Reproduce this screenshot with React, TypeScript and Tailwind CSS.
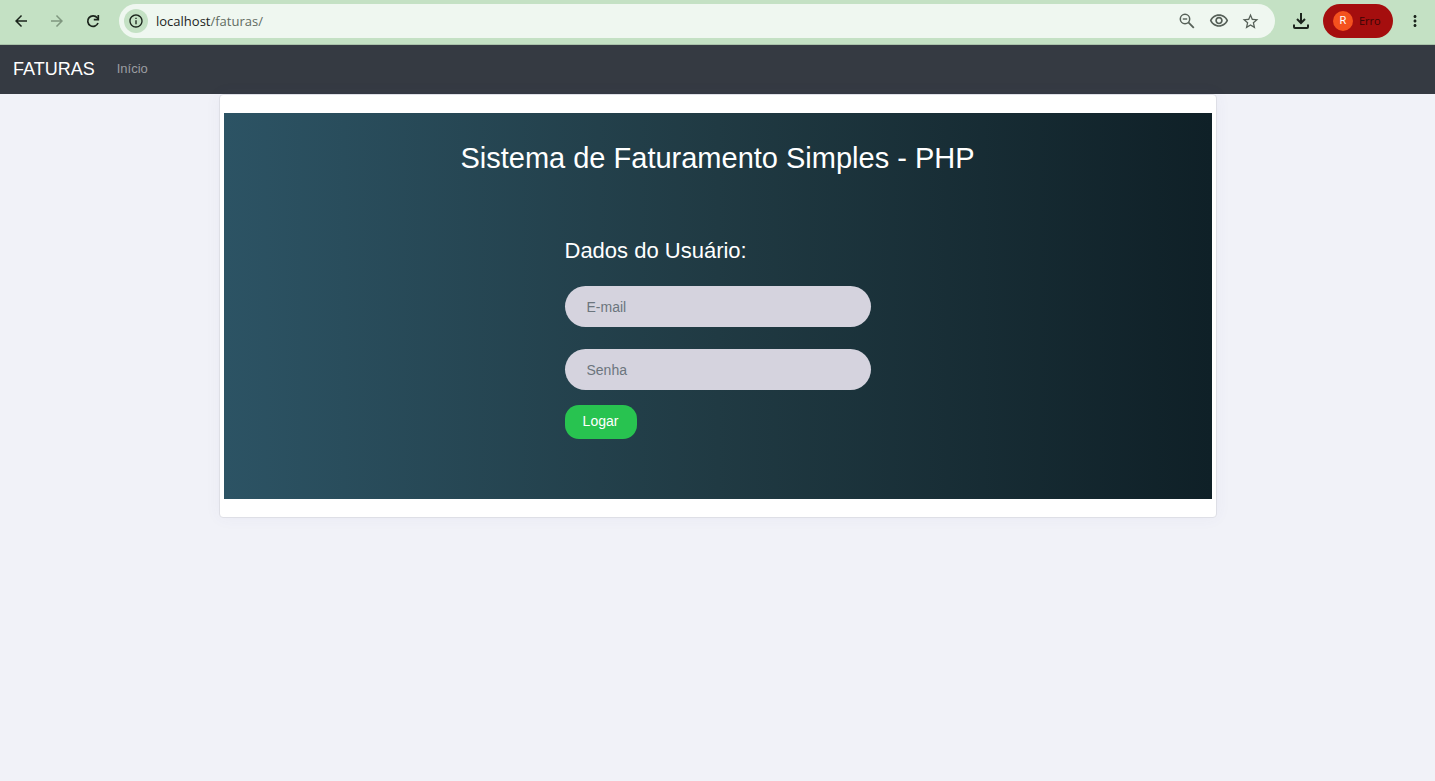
import { useState } from 'react'
import {
  MdArrowBack,
  MdArrowForward,
  MdMoreVert,
  MdOutlineInfo,
  MdOutlineVisibility,
  MdStarBorder,
} from 'react-icons/md'

function ReloadIcon() {
  return (
    <svg width="18" height="18" viewBox="0 0 18 18" fill="none" stroke="currentColor" strokeWidth="1.7">
      <path d="M14 11a5.3 5.3 0 1 1-.8-5.2L14.4 7.2" />
      <path d="M14.3 3v4.7H9.8" />
    </svg>
  )
}

function ZoomOutIcon() {
  return (
    <svg width="20" height="20" viewBox="0 0 20 20" fill="none" stroke="currentColor">
      <circle cx="8" cy="8" r="4.7" strokeWidth="1.5" />
      <path d="M5.8 8h4.4" strokeWidth="1.4" />
      <path d="m11.4 11.4 5.4 5.4" strokeWidth="1.8" />
    </svg>
  )
}

function DownloadIcon() {
  return (
    <svg width="18" height="18" viewBox="0 0 18 18" fill="none" stroke="currentColor" strokeWidth="2">
      <path d="M9 1v10M5 7l4 4 4-4" />
      <path d="M2 12.5V15q0 1 1 1h12q1 0 1-1v-2.5" />
    </svg>
  )
}

function BrowserBar() {
  return (
    <div className="flex h-[45px] items-center border-b border-[#a9c2a9] bg-[#c4e1c4] pr-[11px] pb-[2px] pl-3 text-[#1b241c]">
      <div className="flex items-center gap-[18px]">
        <button aria-label="Voltar"><MdArrowBack size={18} /></button>
        <button aria-label="Avançar" className="text-[#7f977f]"><MdArrowForward size={18} /></button>
        <button aria-label="Recarregar"><ReloadIcon /></button>
      </div>

      <div className="ml-[17px] flex h-[34px] flex-1 items-center rounded-full bg-[#eff7f0] pr-[15px] pl-[5px]">
        <button aria-label="Informações do site" className="flex size-6 items-center justify-center rounded-full bg-[#c4e1c4]">
          <MdOutlineInfo size={16} />
        </button>
        <a href="/faturas/" className="ml-2 flex-1 pt-px font-['Open_Sans',sans-serif] text-[13px]">
          localhost<span className="text-[#5f6b61]">/faturas/</span>
        </a>
        <div className="flex items-center gap-3 text-[#566058]">
          <button aria-label="Zoom"><ZoomOutIcon /></button>
          <button aria-label="Mostrar"><MdOutlineVisibility size={20} /></button>
          <button aria-label="Favoritos"><MdStarBorder size={19} /></button>
        </div>
      </div>

      <button aria-label="Downloads" className="ml-[17px]"><DownloadIcon /></button>
      <button className="ml-[13px] flex h-[34px] w-[70px] items-center gap-[6px] rounded-full bg-[#a50e0e] pl-[10px] font-['Open_Sans',sans-serif] text-[11px] text-[#3a0505]">
        <span className="flex size-5 items-center justify-center rounded-full bg-[#f4511e] font-[Roboto,sans-serif] text-white">R</span>
        Erro
      </button>
      <button aria-label="Menu" className="ml-[13px]"><MdMoreVert size={18} /></button>
    </div>
  )
}

function Navbar() {
  return (
    <nav className="flex h-[49px] items-center gap-[22px] bg-[#353a42] px-[13px] pb-[2px]">
      <a href="#" className="text-lg text-white">FATURAS</a>
      <a href="#" className="text-[13px] text-[#9b9da1]">Início</a>
    </nav>
  )
}

const inputClass =
  'h-[41px] w-full rounded-full bg-[#d5d3de] px-[22px] text-sm text-[#495057] outline-none placeholder:text-[#6c757d]'

function LoginForm() {
  const [email, setEmail] = useState('')
  const [senha, setSenha] = useState('')

  return (
    <form onSubmit={e => e.preventDefault()} className="mx-auto w-[306px]">
      <h2 className="text-[22px] leading-7">Dados do Usuário:</h2>
      <input
        type="email"
        aria-label="E-mail"
        placeholder="E-mail"
        value={email}
        onChange={e => setEmail(e.target.value)}
        className={`${inputClass} mt-[21px]`}
      />
      <input
        type="password"
        aria-label="Senha"
        placeholder="Senha"
        value={senha}
        onChange={e => setSenha(e.target.value)}
        className={`${inputClass} mt-[22px]`}
      />
      <button type="submit" className="mt-[15px] h-[34px] w-[72px] rounded-[14px] bg-[#28c350] pb-[2px] text-sm">
        Logar
      </button>
    </form>
  )
}

function App() {
  return (
    <div className="min-h-screen bg-[#f1f2f8] font-['Liberation_Sans',Arial,sans-serif]">
      <BrowserBar />
      <Navbar />
      <main className="mx-auto max-w-[998px] rounded-[4px] border border-[#dedfe6] bg-white px-1 py-[18px] shadow-[0_0_16px_rgba(80,80,150,0.05)]">
        <div className="bg-linear-to-r/srgb from-[#2c5364] via-[#203a43] to-[#0f2027] pt-[27px] pb-[60px] text-white">
          <h1 className="text-center text-[29px] leading-9">Sistema de Faturamento Simples - PHP</h1>
          <div className="mt-[61px]">
            <LoginForm />
          </div>
        </div>
      </main>
    </div>
  )
}

export default App
